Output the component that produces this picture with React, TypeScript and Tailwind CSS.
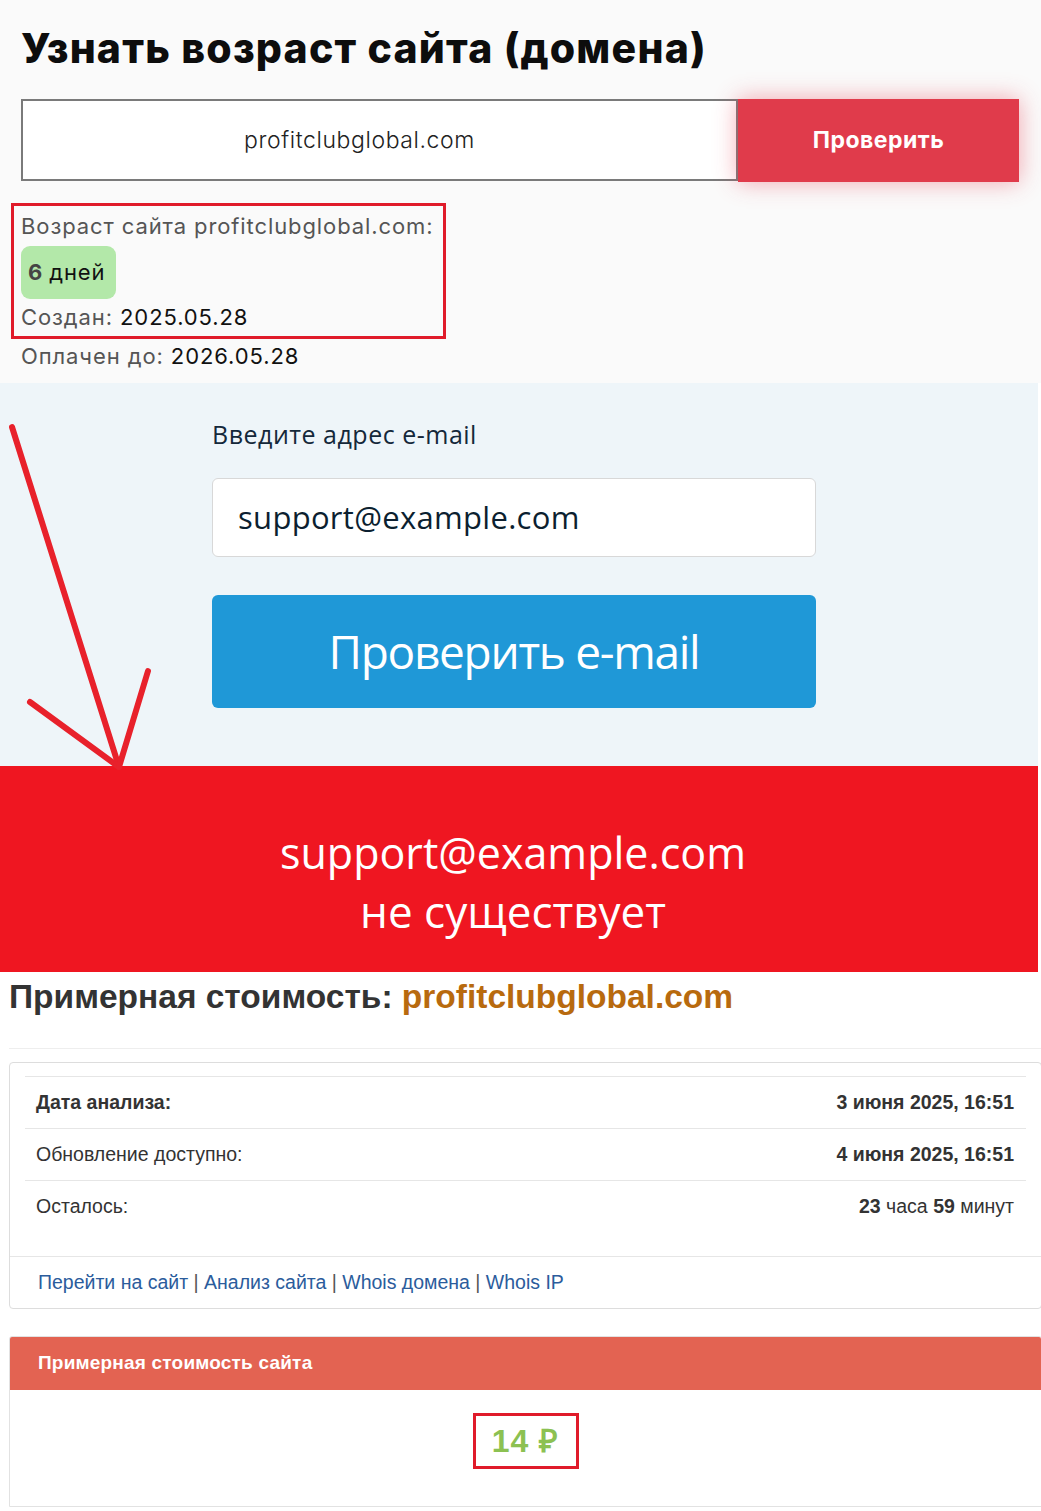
import React from "react";

export default function App() {
  return (
    <div className="w-[1041px] min-h-[1511px] bg-white overflow-hidden" style={{ fontFamily: "Inter, sans-serif" }}>
      {/* Section 1 */}
      <div className="bg-[#fafafa] h-[383px] pt-[20px] px-[21px] font-['Inter',sans-serif]">
        <h1 className="text-[41px] leading-[56px] font-extrabold text-[#0d0d0d] tracking-[1.2px]">
          Узнать возраст сайта (домена)
        </h1>
        <div className="flex mt-[23px]">
          <div className="w-[717px] h-[82px] border-2 border-[#7a7a7a] bg-white flex items-center justify-center pr-[40px] text-[23px] tracking-[0.6px] font-light text-[#222]">
            profitclubglobal.com
          </div>
          <div className="w-[281px] h-[83px] bg-[#e03b4b] shadow-[0_0_22px_rgba(230,60,80,0.45)] flex items-center justify-center text-white font-bold text-[23px] tracking-[0.5px]">
            Проверить
          </div>
        </div>
        <div className="ml-[-10px] mt-[21px] w-[435px] h-[136px] border-[3px] border-[#e01b2a] pl-[7px] text-[22px] tracking-[0.9px]">
          <div className="leading-[40px] text-[#555]">Возраст сайта profitclubglobal.com:</div>
          <div className="inline-flex items-center h-[53px] w-[95px] rounded-[9px] bg-[#b3e8a9] pl-[7px]">
            <span className="font-bold text-[#444]">6</span>
            <span className="ml-[6px] text-[#111]">дней</span>
          </div>
          <div className="leading-[36px] text-[#555]">
            Создан: <span className="text-[#111]">2025.05.28</span>
          </div>
        </div>
        <div className="leading-[34px] text-[22px] tracking-[0.9px] text-[#555]">
          Оплачен до: <span className="text-[#111]">2026.05.28</span>
        </div>
      </div>

      {/* Sections 2 and 3 with arrow */}
      <div className="relative">
        <div className="w-[1038px] h-[383px] bg-[#eef5f9] pt-[35px] pl-[212px] font-['Open_Sans',sans-serif]">
          <div className="text-[25px] leading-[32px] tracking-[0.5px] text-[#14283a]">Введите адрес e-mail</div>
          <div className="mt-[28px] w-[604px] h-[79px] rounded-[6px] border border-[#d8d8d8] bg-white flex items-center pl-[25px] text-[31px] tracking-[0.3px] text-[#0c1f30]">
            support@example.com
          </div>
          <div className="mt-[38px] w-[604px] h-[113px] rounded-[6px] bg-[#1f98d7] flex items-center justify-center text-[46px] tracking-[-1.3px] text-white">
            Проверить e-mail
          </div>
        </div>
        <div className="w-[1038px] h-[206px] bg-[#ef1621] flex flex-col items-center pt-[57px] pr-[12px] text-white font-['Open_Sans',sans-serif]">
          <div className="text-[43px] leading-[59px]">support@example.com</div>
          <div className="text-[44px] leading-[59px]">не существует</div>
        </div>
        <svg className="absolute left-0 top-0 pointer-events-none" width="200" height="420" viewBox="0 0 200 420">
          <g stroke="#e8212b" strokeWidth="6" strokeLinecap="round" fill="none">
            <line x1="12" y1="44" x2="119" y2="384" />
            <line x1="30" y1="319" x2="119" y2="384" />
            <line x1="148" y1="288" x2="119" y2="384" />
          </g>
        </svg>
      </div>

      {/* Section 4 */}
      <div className="pl-[9px] font-['Liberation_Sans',Arial,sans-serif]">
        <h2 className="pt-[6px] text-[33.5px] leading-[38px] font-bold text-[#333]">
          Примерная стоимость: <span className="text-[#b86a0e]">profitclubglobal.com</span>
        </h2>
        <div className="mt-[32px] h-px w-[1040px] bg-[#eeeeee]" />
        <div className="mt-[13px] w-[1033px] border border-[#dddddd] rounded-[4px] bg-white">
          <div className="px-[15px] pt-[13px]">
            <div className="text-[19.5px] text-[#333]">
              <div className="flex justify-between items-center h-[52px] border-t border-[#e6e6e6] pl-[11px] pr-[12px]">
                <span className="font-bold">Дата анализа:</span>
                <span className="font-bold">3 июня 2025, 16:51</span>
              </div>
              <div className="flex justify-between items-center h-[52px] border-t border-[#e6e6e6] pl-[11px] pr-[12px]">
                <span>Обновление доступно:</span>
                <span className="font-bold">4 июня 2025, 16:51</span>
              </div>
              <div className="flex justify-between items-center h-[52px] border-t border-[#e6e6e6] pl-[11px] pr-[12px]">
                <span>Осталось:</span>
                <span>
                  <b>23</b> часа <b>59</b> минут
                </span>
              </div>
            </div>
          </div>
          <div className="mt-[24px] border-t border-[#e6e6e6] h-[52px] flex items-center pl-[28px] text-[19.5px] text-[#2b5c9c] whitespace-pre">
            <span>Перейти на сайт</span>
            <span className="text-[#555]"> | </span>
            <span>Анализ сайта</span>
            <span className="text-[#555]"> | </span>
            <span>Whois домена</span>
            <span className="text-[#555]"> | </span>
            <span>Whois IP</span>
          </div>
        </div>

        {/* Section 5 */}
        <div className="mt-[27px] w-[1033px] rounded-t-[3px] overflow-hidden border border-[#e2e2e2]">
          <div className="h-[53px] bg-[#e36352] flex items-center pl-[28px] text-white font-bold text-[19px] tracking-[0.2px]">
            Примерная стоимость сайта
          </div>
          <div className="h-[116px] bg-white flex justify-center pt-[23px]">
            <div className="w-[106px] h-[56px] border-[3px] border-[#e01b2a] flex items-center justify-center text-[32px] tracking-[1px] font-bold text-[#8cc152]">
              14 ₽
            </div>
          </div>
        </div>
      </div>
    </div>
  );
}
